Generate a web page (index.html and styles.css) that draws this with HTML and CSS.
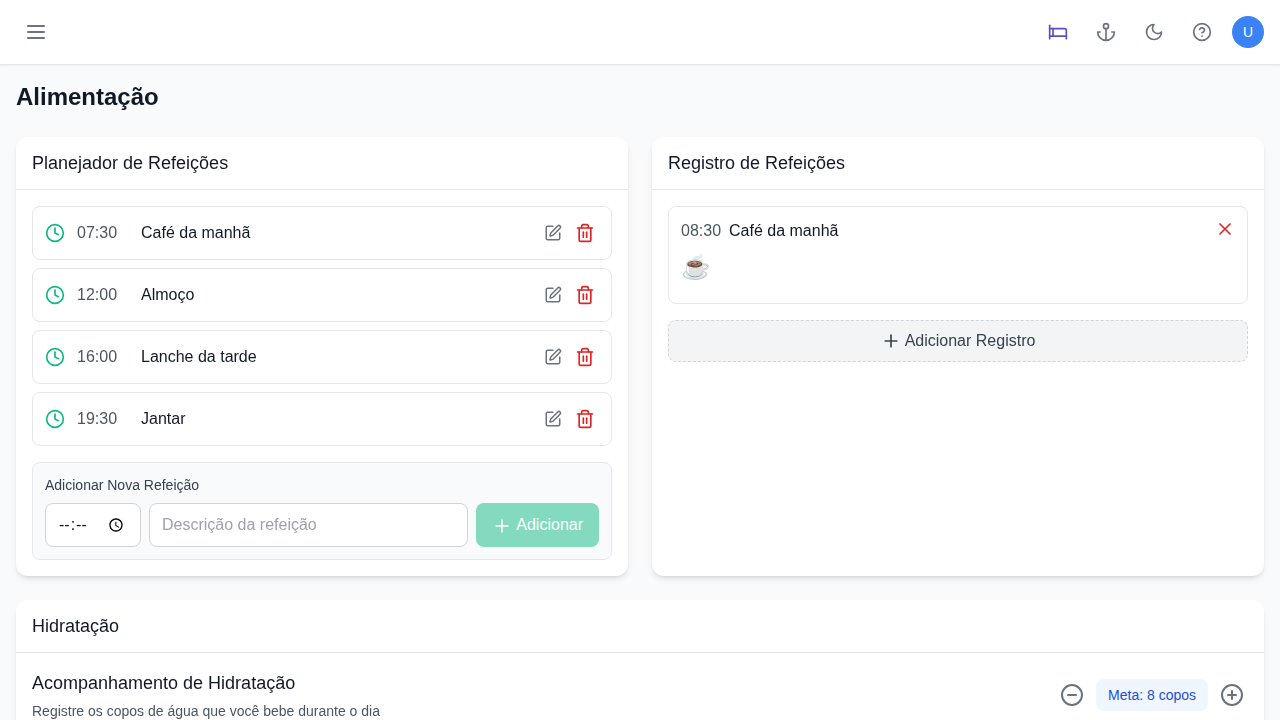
FILE: index.html
```html
<!DOCTYPE html>
<html lang="pt-BR">
<head>
  <meta charset="UTF-8">
  <title>Alimentação</title>
  <link rel="stylesheet" href="styles.css">
</head>
<body>
<div class="app">
  <header class="topbar">
    <button class="icon-btn menu-btn" type="button">
      <svg class="ic ic-24" viewBox="0 0 24 24"><path d="M4 12h16M4 6h16M4 18h16"/></svg>
    </button>
    <div class="topbar-right">
      <button class="icon-btn top-btn bed" type="button">
        <svg class="ic ic-20" viewBox="0 0 24 24"><path d="M2 4v16"/><path d="M2 8h18a2 2 0 0 1 2 2v10"/><path d="M2 17h20"/><path d="M6 8v9"/></svg>
      </button>
      <button class="icon-btn top-btn" type="button">
        <svg class="ic ic-20" viewBox="0 0 24 24"><circle cx="12" cy="5" r="3"/><path d="M12 22V8"/><path d="M5 12H2a10 10 0 0 0 20 0h-3"/></svg>
      </button>
      <button class="icon-btn top-btn" type="button">
        <svg class="ic ic-20" viewBox="0 0 24 24"><path d="M12 3a6 6 0 0 0 9 9 9 9 0 1 1-9-9Z"/></svg>
      </button>
      <button class="icon-btn top-btn" type="button">
        <svg class="ic ic-20" viewBox="0 0 24 24"><circle cx="12" cy="12" r="10"/><path d="M9.09 9a3 3 0 0 1 5.83 1c0 2-3 3-3 3"/><path d="M12 17h.01"/></svg>
      </button>
      <div class="avatar">U</div>
    </div>
  </header>

  <main class="content">
    <h1 class="page-title">Alimentação</h1>

    <div class="two-cols">
      <section class="card">
        <h2 class="card-title">Planejador de Refeições</h2>
        <div class="card-body">
          <ul class="meals">
            <li class="meal">
              <svg class="ic ic-20 clock" viewBox="0 0 24 24"><circle cx="12" cy="12" r="10"/><path d="M12 6v6l4 2"/></svg>
              <span class="meal-time">07:30</span>
              <span class="meal-name">Café da manhã</span>
              <button class="icon-btn row-btn" type="button"><svg class="ic ic-18" viewBox="0 0 24 24"><path d="M12 3H5a2 2 0 0 0-2 2v14a2 2 0 0 0 2 2h14a2 2 0 0 0 2-2v-7"/><path d="M18.375 2.625a1 1 0 0 1 3 3l-9.013 9.014a2 2 0 0 1-.853.505l-2.873.84a.5.5 0 0 1-.62-.62l.84-2.873a2 2 0 0 1 .506-.852z"/></svg></button>
              <button class="icon-btn row-btn danger" type="button"><svg class="ic ic-20" viewBox="0 0 24 24"><path d="M3 6h18"/><path d="M19 6v14c0 1-1 2-2 2H7c-1 0-2-1-2-2V6"/><path d="M8 6V4c0-1 1-2 2-2h4c1 0 2 1 2 2v2"/><path d="M10 11v6"/><path d="M14 11v6"/></svg></button>
            </li>
            <li class="meal">
              <svg class="ic ic-20 clock" viewBox="0 0 24 24"><circle cx="12" cy="12" r="10"/><path d="M12 6v6l4 2"/></svg>
              <span class="meal-time">12:00</span>
              <span class="meal-name">Almoço</span>
              <button class="icon-btn row-btn" type="button"><svg class="ic ic-18" viewBox="0 0 24 24"><path d="M12 3H5a2 2 0 0 0-2 2v14a2 2 0 0 0 2 2h14a2 2 0 0 0 2-2v-7"/><path d="M18.375 2.625a1 1 0 0 1 3 3l-9.013 9.014a2 2 0 0 1-.853.505l-2.873.84a.5.5 0 0 1-.62-.62l.84-2.873a2 2 0 0 1 .506-.852z"/></svg></button>
              <button class="icon-btn row-btn danger" type="button"><svg class="ic ic-20" viewBox="0 0 24 24"><path d="M3 6h18"/><path d="M19 6v14c0 1-1 2-2 2H7c-1 0-2-1-2-2V6"/><path d="M8 6V4c0-1 1-2 2-2h4c1 0 2 1 2 2v2"/><path d="M10 11v6"/><path d="M14 11v6"/></svg></button>
            </li>
            <li class="meal">
              <svg class="ic ic-20 clock" viewBox="0 0 24 24"><circle cx="12" cy="12" r="10"/><path d="M12 6v6l4 2"/></svg>
              <span class="meal-time">16:00</span>
              <span class="meal-name">Lanche da tarde</span>
              <button class="icon-btn row-btn" type="button"><svg class="ic ic-18" viewBox="0 0 24 24"><path d="M12 3H5a2 2 0 0 0-2 2v14a2 2 0 0 0 2 2h14a2 2 0 0 0 2-2v-7"/><path d="M18.375 2.625a1 1 0 0 1 3 3l-9.013 9.014a2 2 0 0 1-.853.505l-2.873.84a.5.5 0 0 1-.62-.62l.84-2.873a2 2 0 0 1 .506-.852z"/></svg></button>
              <button class="icon-btn row-btn danger" type="button"><svg class="ic ic-20" viewBox="0 0 24 24"><path d="M3 6h18"/><path d="M19 6v14c0 1-1 2-2 2H7c-1 0-2-1-2-2V6"/><path d="M8 6V4c0-1 1-2 2-2h4c1 0 2 1 2 2v2"/><path d="M10 11v6"/><path d="M14 11v6"/></svg></button>
            </li>
            <li class="meal">
              <svg class="ic ic-20 clock" viewBox="0 0 24 24"><circle cx="12" cy="12" r="10"/><path d="M12 6v6l4 2"/></svg>
              <span class="meal-time">19:30</span>
              <span class="meal-name">Jantar</span>
              <button class="icon-btn row-btn" type="button"><svg class="ic ic-18" viewBox="0 0 24 24"><path d="M12 3H5a2 2 0 0 0-2 2v14a2 2 0 0 0 2 2h14a2 2 0 0 0 2-2v-7"/><path d="M18.375 2.625a1 1 0 0 1 3 3l-9.013 9.014a2 2 0 0 1-.853.505l-2.873.84a.5.5 0 0 1-.62-.62l.84-2.873a2 2 0 0 1 .506-.852z"/></svg></button>
              <button class="icon-btn row-btn danger" type="button"><svg class="ic ic-20" viewBox="0 0 24 24"><path d="M3 6h18"/><path d="M19 6v14c0 1-1 2-2 2H7c-1 0-2-1-2-2V6"/><path d="M8 6V4c0-1 1-2 2-2h4c1 0 2 1 2 2v2"/><path d="M10 11v6"/><path d="M14 11v6"/></svg></button>
            </li>
          </ul>

          <div class="add-box">
            <label class="add-label">Adicionar Nova Refeição</label>
            <div class="add-row">
              <input class="field time-field" type="time">
              <input class="field text-field" type="text" placeholder="Descrição da refeição">
              <button class="add-btn" type="button" disabled>
                <svg class="ic ic-20" viewBox="0 0 24 24"><path d="M5 12h14"/><path d="M12 5v14"/></svg>
                Adicionar
              </button>
            </div>
          </div>
        </div>
      </section>

      <section class="card">
        <h2 class="card-title">Registro de Refeições</h2>
        <div class="card-body">
          <div class="log-item">
            <div class="log-head">
              <span class="log-time">08:30</span>
              <span class="log-name">Café da manhã</span>
              <button class="icon-btn close-btn" type="button">
                <svg class="ic ic-20" viewBox="0 0 24 24"><path d="M18 6 6 18"/><path d="m6 6 12 12"/></svg>
              </button>
            </div>
            <div class="log-emoji">☕</div>
          </div>
          <button class="log-add" type="button">
            <svg class="ic ic-20" viewBox="0 0 24 24"><path d="M5 12h14"/><path d="M12 5v14"/></svg>
            Adicionar Registro
          </button>
        </div>
      </section>
    </div>

    <section class="card">
      <h2 class="card-title">Hidratação</h2>
      <div class="card-body hydro">
        <div class="hydro-text">
          <h3 class="hydro-title">Acompanhamento de Hidratação</h3>
          <p class="hydro-sub">Registre os copos de água que você bebe durante o dia</p>
        </div>
        <div class="hydro-ctrl">
          <button class="icon-btn round-btn" type="button">
            <svg class="ic ic-24" viewBox="0 0 24 24"><circle cx="12" cy="12" r="10"/><path d="M8 12h8"/></svg>
          </button>
          <span class="goal">Meta: 8 copos</span>
          <button class="icon-btn round-btn" type="button">
            <svg class="ic ic-24" viewBox="0 0 24 24"><circle cx="12" cy="12" r="10"/><path d="M8 12h8"/><path d="M12 8v8"/></svg>
          </button>
        </div>
      </div>
    </section>
  </main>
</div>
</body>
</html>
```

FILE: styles.css
```css
* {
  margin: 0;
  padding: 0;
  box-sizing: border-box;
}

html, body {
  height: 100%;
}

body {
  font-family: "Liberation Sans", Arial, sans-serif;
  font-size: 16px;
  line-height: 24px;
  color: #111827;
  background-color: #f9fafb;
}

ul {
  list-style: none;
}

button {
  font-family: inherit;
  font-size: 16px;
  border: 0;
  background: none;
}

.app {
  height: 100vh;
  display: flex;
  flex-direction: column;
  overflow: hidden;
  will-change: opacity;
}

/* icons */
.ic {
  display: block;
  fill: none;
  stroke: currentColor;
  stroke-width: 2;
  stroke-linecap: round;
  stroke-linejoin: round;
  flex-shrink: 0;
}

.ic-18 {
  width: 18px;
  height: 18px;
}

.ic-20 {
  width: 20px;
  height: 20px;
}

.ic-24 {
  width: 24px;
  height: 24px;
}

.icon-btn {
  display: flex;
  align-items: center;
  justify-content: center;
  color: #6b7280;
}

/* top bar */
.topbar {
  flex-shrink: 0;
  height: 65px;
  display: flex;
  align-items: center;
  justify-content: space-between;
  padding: 0 16px;
  background-color: #fff;
  border-bottom: 1px solid #e5e7eb;
  box-shadow: 0 1px 2px rgba(0, 0, 0, .05);
}

.menu-btn {
  padding: 8px;
}

.topbar-right {
  display: flex;
  align-items: center;
  gap: 12px;
}

.top-btn {
  padding: 8px;
}

.bed {
  color: #5b4fc4;
}

.avatar {
  width: 32px;
  height: 32px;
  border-radius: 50%;
  background-color: #3b82f6;
  color: #fff;
  font-size: 14px;
  display: flex;
  align-items: center;
  justify-content: center;
}

/* page */
.content {
  flex: 1;
  overflow: hidden;
  padding: 16px;
}

.page-title {
  font-size: 24px;
  line-height: 32px;
  font-weight: 700;
  margin-bottom: 24px;
}

.two-cols {
  display: grid;
  grid-template-columns: 1fr 1fr;
  gap: 24px;
  margin-bottom: 24px;
}

.card {
  background-color: #fff;
  border-radius: 12px;
  box-shadow: 0 4px 6px -1px rgba(0, 0, 0, .1), 0 2px 4px -2px rgba(0, 0, 0, .1);
}

.card-title {
  font-size: 18px;
  line-height: 28px;
  font-weight: 400;
  padding: 12px 16px;
  border-bottom: 1px solid #e5e7eb;
  height: 53px;
}

.card-body {
  padding: 16px;
}

/* meal planner */
.meals {
  display: flex;
  flex-direction: column;
  gap: 8px;
  margin-bottom: 16px;
}

.meal {
  display: flex;
  align-items: center;
  padding: 12px;
  background-color: #fff;
  border: 1px solid #e5e7eb;
  border-radius: 8px;
}

.clock {
  color: #10b981;
  margin-right: 12px;
}

.meal-time {
  width: 64px;
  color: #4b5563;
}

.meal-name {
  flex: 1;
}

.row-btn {
  padding: 4px;
  margin-left: 4px;
  color: #6b7280;
}

.row-btn:nth-last-child(2) {
  margin-right: 1px;
}

.row-btn.danger {
  color: #dc2626;
}

.add-box {
  padding: 12px;
  background-color: #f9fafb;
  border: 1px solid #e5e7eb;
  border-radius: 8px;
}

.add-label {
  display: block;
  font-size: 14px;
  line-height: 20px;
  color: #374151;
  margin-bottom: 8px;
}

.add-row {
  display: flex;
  gap: 8px;
}

.field {
  height: 44px;
  padding: 0 12px;
  font-family: inherit;
  font-size: 16px;
  color: #111827;
  background-color: #fff;
  border: 1px solid #d1d5db;
  border-radius: 8px;
  min-width: 0;
}

.field::placeholder {
  color: #9ca3af;
}

.time-field {
  width: 96px;
}

.time-field::-webkit-datetime-edit-ampm-field {
  display: none;
}

.text-field {
  flex: 1;
}

.add-btn {
  display: flex;
  align-items: center;
  gap: 4px;
  padding: 0 16px;
  color: #fff;
  background-color: #10b981;
  border-radius: 8px;
  opacity: .5;
}

.add-btn .ic {
  margin-top: 2px;
}

/* meal log */
.log-item {
  padding: 12px;
  border: 1px solid #e5e7eb;
  border-radius: 8px;
  margin-bottom: 16px;
}

.log-head {
  display: flex;
  align-items: flex-start;
  gap: 8px;
}

.log-time {
  color: #4b5563;
}

.close-btn {
  margin-left: auto;
  color: #dc2626;
}

.log-emoji {
  font-size: 24px;
  line-height: 32px;
  margin: 8px 0;
}

.log-add {
  width: 100%;
  height: 42px;
  display: flex;
  align-items: center;
  justify-content: center;
  gap: 4px;
  color: #374151;
  background-color: #f3f4f6;
  border: 1px dashed #d1d5db;
  border-radius: 8px;
}

/* hydration */
.hydro {
  display: flex;
  align-items: center;
  justify-content: space-between;
}

.hydro-title {
  font-size: 18px;
  line-height: 28px;
  font-weight: 400;
  margin-bottom: 4px;
}

.hydro-sub {
  font-size: 14px;
  line-height: 20px;
  color: #4b5563;
}

.hydro-ctrl {
  display: flex;
  align-items: center;
  gap: 8px;
}

.round-btn {
  padding: 4px;
}

.goal {
  padding: 4px 12px;
  font-size: 14px;
  color: #1d4ed8;
  background-color: #eff6ff;
  border-radius: 8px;
}
```
